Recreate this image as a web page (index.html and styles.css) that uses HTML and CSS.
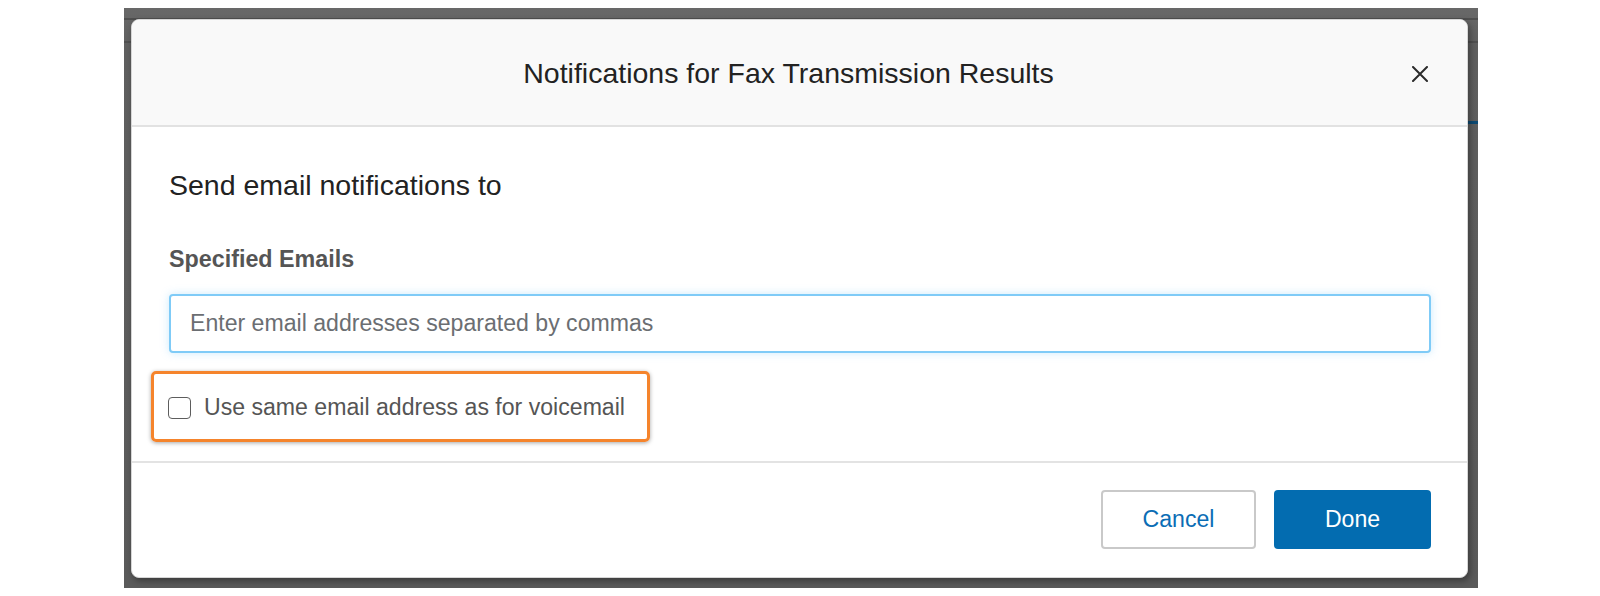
FILE: index.html
```html
<!DOCTYPE html>
<html lang="en">
<head>
<meta charset="utf-8">
<title>Notifications for Fax Transmission Results</title>
<link rel="stylesheet" href="styles.css">
</head>
<body>
<div class="backdrop">
  <div class="modal">
    <div class="modal-header">
      <h1 class="modal-title">Notifications for Fax Transmission Results</h1>
      <button class="close-btn" type="button" aria-label="Close">
        <svg width="16" height="16" viewBox="0 0 16 16"><path d="M1 1 L15 15 M15 1 L1 15" stroke="#2b2b2b" stroke-width="2" fill="none" stroke-linecap="round"/></svg>
      </button>
    </div>
    <div class="modal-body">
      <h2 class="section-title">Send email notifications to</h2>
      <label class="field-label" for="emails">Specified Emails</label>
      <input id="emails" class="email-input" type="text" placeholder="Enter email addresses separated by commas">
      <div class="highlight">
        <label class="check-row">
          <span class="checkbox"></span>
          <span class="check-label">Use same email address as for voicemail</span>
        </label>
      </div>
    </div>
    <div class="modal-footer">
      <button class="btn btn-cancel" type="button">Cancel</button>
      <button class="btn btn-done" type="button">Done</button>
    </div>
  </div>
</div>
</body>
</html>
```
FILE: styles.css
```css
html, body {
  margin: 0;
  padding: 0;
  background: #ffffff;
}

body {
  font-family: "Liberation Sans", Arial, Helvetica, sans-serif;
}

.backdrop {
  box-sizing: border-box;
  margin: 8px 0 0 124px;
  width: 1354px;
  height: 580px;
  padding: 11px 10px 10px 7px;
  background:
    linear-gradient(#4f4f4f, #4f4f4f) 0 10px / 100% 2px no-repeat,
    linear-gradient(#505050, #505050) 0 33px / 100% 2px no-repeat,
    linear-gradient(#0d4a73, #0d4a73) 100% 113px / 12px 3px no-repeat,
    linear-gradient(#686868 0px, #5f5f5f 40px, #5a5a5a 100%);
}

.modal {
  box-sizing: border-box;
  width: 1337px;
  height: 559px;
  background: #ffffff;
  border-radius: 8px;
  border: 1px solid #d6d6d6;
  box-shadow: 2px 3px 6px rgba(0, 0, 0, 0.35);
  display: flex;
  flex-direction: column;
  overflow: hidden;
}

.modal-header {
  box-sizing: border-box;
  height: 107px;
  flex: none;
  background: #f9f9f9;
  border-bottom: 2px solid #e2e2e2;
  display: grid;
  grid-template-columns: 1fr 23px;
  align-items: center;
  padding: 1px 36px 0 37px;
}

.modal-title {
  margin: 0;
  font-weight: 400;
  font-size: 28.5px;
  color: #222222;
  text-align: center;
  letter-spacing: 0;
}

.close-btn {
  border: 0;
  background: transparent;
  padding: 0;
  width: 23px;
  height: 23px;
  display: flex;
  align-items: center;
  justify-content: center;
  margin-top: 1px;
}

.modal-body {
  flex: 1;
  display: flex;
  flex-direction: column;
  align-items: flex-start;
  padding: 41px 36px 0 37px;
  border-bottom: 2px solid #e3e3e3;
}

.section-title {
  margin: 0;
  font-weight: 400;
  font-size: 28.5px;
  line-height: 34px;
  color: #222222;
}

.field-label {
  margin-top: 43px;
  font-weight: 700;
  font-size: 23.3px;
  line-height: 28px;
  color: #555555;
}

.email-input {
  box-sizing: border-box;
  margin-top: 21px;
  width: 100%;
  height: 59px;
  border: 2px solid #7fcbf7;
  border-radius: 4px;
  box-shadow: 0 0 9px rgba(110, 195, 245, 0.35);
  padding: 0 19px;
  font-family: "Liberation Sans", Arial, Helvetica, sans-serif;
  font-size: 23.1px;
  color: #333333;
  outline: none;
  background: #ffffff;
}

.email-input::placeholder {
  color: #6b6e72;
}

.highlight {
  box-sizing: border-box;
  margin: 18px 0 0 -18px;
  width: 499px;
  height: 71px;
  border: 3px solid #f5842c;
  border-radius: 5px;
  box-shadow: 0 1px 4px rgba(0, 0, 0, 0.35);
  display: flex;
  align-items: center;
  padding-left: 14px;
}

.check-row {
  display: flex;
  align-items: center;
  gap: 13px;
  margin-top: 2px;
}

.checkbox {
  box-sizing: border-box;
  width: 23px;
  height: 22px;
  border: 1.5px solid #5d5d5d;
  border-radius: 4px;
  background: #ffffff;
}

.check-label {
  font-size: 23.1px;
  color: #555555;
}

.modal-footer {
  flex: none;
  height: 114px;
  box-sizing: border-box;
  display: flex;
  justify-content: flex-end;
  align-items: flex-start;
  gap: 18px;
  padding: 27px 36px 0 0;
}

.btn {
  box-sizing: border-box;
  height: 59px;
  border-radius: 4px;
  font-family: "Liberation Sans", Arial, Helvetica, sans-serif;
  font-size: 23.1px;
  cursor: pointer;
}

.btn-cancel {
  width: 155px;
  background: #ffffff;
  border: 2px solid #c9c9c9;
  color: #0b6db5;
}

.btn-done {
  width: 157px;
  background: #036cb0;
  border: 0;
  color: #ffffff;
}
```
